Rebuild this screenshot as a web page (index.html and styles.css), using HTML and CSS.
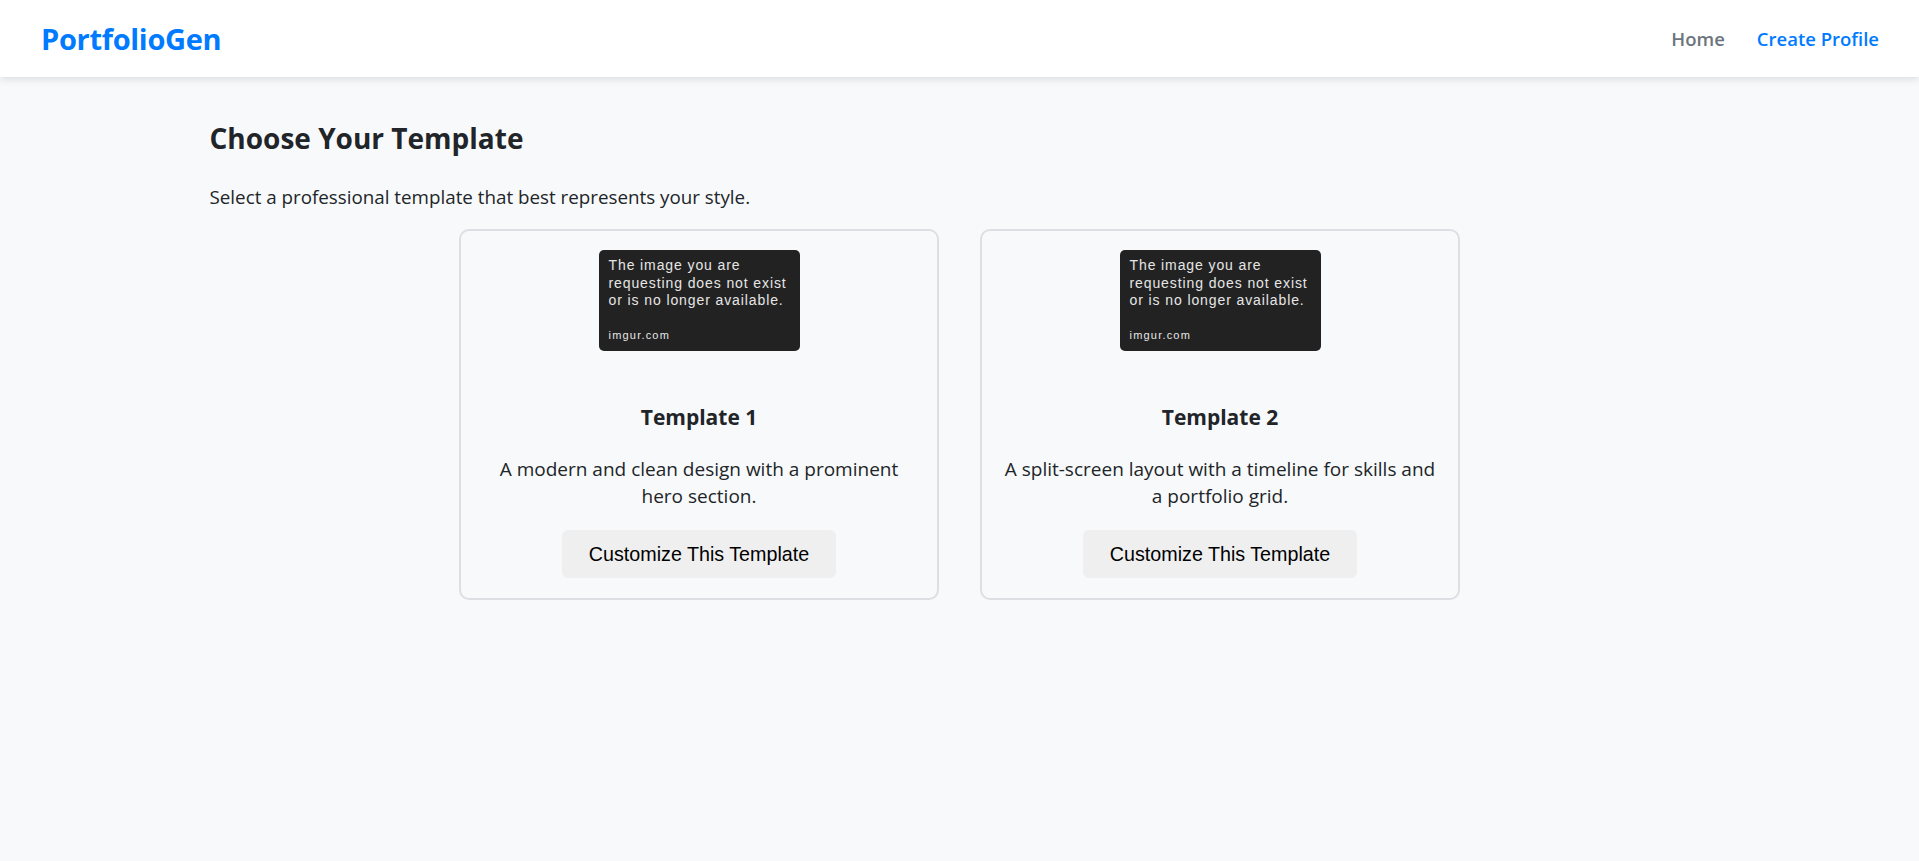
FILE: index.html
```html
<!DOCTYPE html>
<html lang="en">
<head>
<meta charset="utf-8">
<title>PortfolioGen</title>
<link rel="stylesheet" href="styles.css">
</head>
<body>
<header class="topbar">
  <a class="logo" href="#">PortfolioGen</a>
  <nav class="nav">
    <a class="nav-link" href="#">Home</a>
    <a class="nav-link active" href="#">Create Profile</a>
  </nav>
</header>
<main class="container">
  <h2 class="page-title">Choose Your Template</h2>
  <p class="page-sub">Select a professional template that best represents your style.</p>
  <div class="cards">
    <div class="card">
      <div class="thumb">
        <div class="thumb-text">The image you are<br>requesting does not exist<br>or is no longer available.</div>
        <div class="thumb-site">imgur.com</div>
      </div>
      <h3 class="card-title">Template 1</h3>
      <p class="card-desc">A modern and clean design with a prominent hero section.</p>
      <button class="btn">Customize This Template</button>
    </div>
    <div class="card">
      <div class="thumb">
        <div class="thumb-text">The image you are<br>requesting does not exist<br>or is no longer available.</div>
        <div class="thumb-site">imgur.com</div>
      </div>
      <h3 class="card-title">Template 2</h3>
      <p class="card-desc">A split-screen layout with a timeline for skills and a portfolio grid.</p>
      <button class="btn">Customize This Template</button>
    </div>
  </div>
</main>
</body>
</html>
```
FILE: styles.css
```css
* { box-sizing: border-box; }
html, body { margin: 0; padding: 0; }
body {
  background: #f8f9fa;
  font-family: "Open Sans", "Noto Sans", sans-serif;
  color: #212529;
}
.topbar {
  height: 77px;
  background: #fff;
  display: flex;
  align-items: center;
  justify-content: space-between;
  padding: 0 40px 0 41px;
  box-shadow: 0 2px 8px rgba(0,0,0,0.12);
}
.logo {
  color: #007bff;
  font-weight: 700;
  font-size: 29px;
  text-decoration: none;
  letter-spacing: -0.3px;
}
.nav { display: flex; gap: 32px; }
.nav-link {
  color: #6c757d;
  font-weight: 600;
  font-size: 18.5px;
  text-decoration: none;
}
.nav-link.active { color: #007bff; }
.container {
  max-width: 1500px;
  margin: 0 auto;
}
.page-title {
  margin: 41px 0 0;
  font-size: 28px;
  font-weight: 700;
  line-height: 40px;
}
.page-sub {
  margin: 27px 0 20px;
  font-size: 18.8px;
  line-height: 24px;
}
.cards {
  display: flex;
  justify-content: center;
  gap: 41px;
}
.card {
  width: 480px;
  border: 2px solid #dcdfe3;
  border-radius: 10px;
  padding: 19px 20px 20px;
  text-align: center;
  display: flex;
  flex-direction: column;
  align-items: center;
}
.thumb {
  width: 201px;
  height: 101px;
  background: #222;
  border-radius: 5px;
  text-align: left;
  padding: 7px 8px 0 10px;
  color: #e6e6e6;
  font-family: "Liberation Sans", Arial, sans-serif;
}
.thumb-text {
  font-size: 14px;
  line-height: 17.5px;
  letter-spacing: 0.9px;
}
.thumb-site {
  margin-top: 19px;
  font-size: 11px;
  letter-spacing: 1.2px;
}
.card-title {
  margin: 51px 0 0;
  font-size: 21px;
  font-weight: 700;
  line-height: 30px;
}
.card-desc {
  margin: 24px 0 20px;
  font-size: 19px;
  line-height: 27px;
}
.btn {
  font-family: "Liberation Sans", Arial, sans-serif;
  font-size: 19.7px;
  color: #000;
  background: #efefef;
  border: none;
  border-radius: 6px;
  width: 274px;
  height: 48px;
  padding: 0;
}
```
